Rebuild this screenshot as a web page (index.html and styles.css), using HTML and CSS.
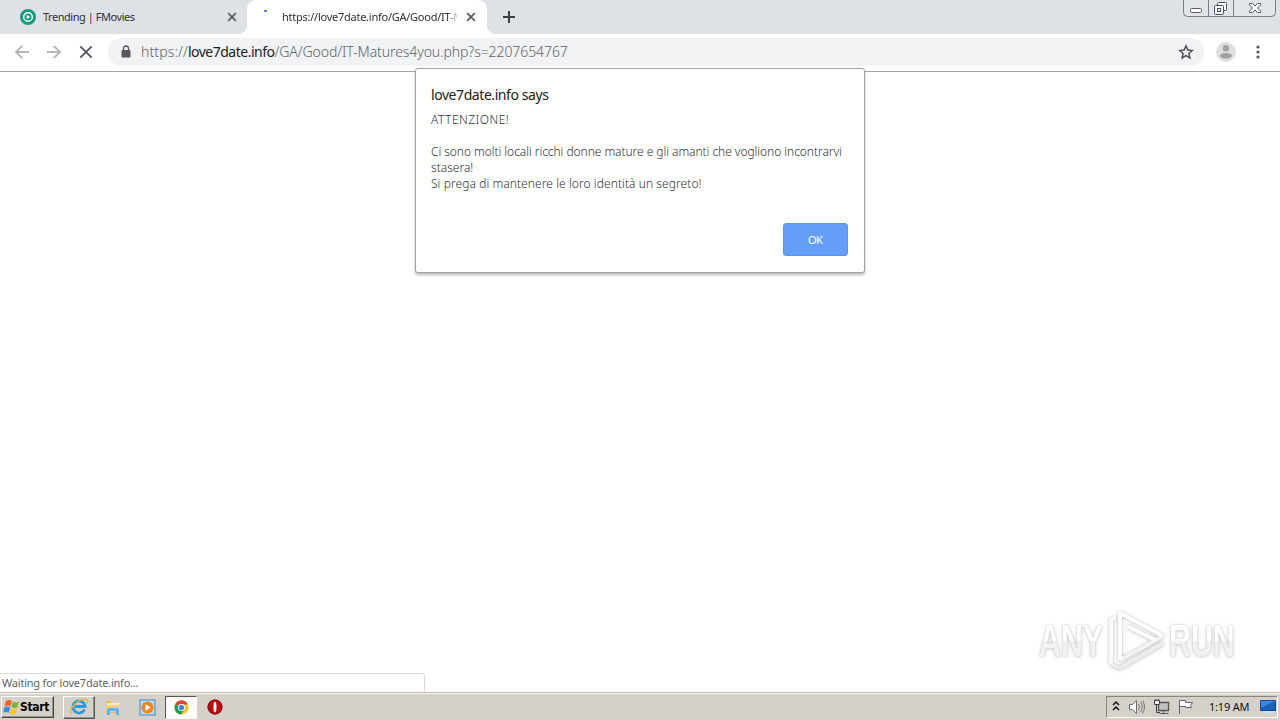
FILE: index.html
```html
<!DOCTYPE html>
<html lang="it">
<head>
<meta charset="utf-8">
<title>love7date.info</title>
<link rel="stylesheet" href="styles.css">
</head>
<body>
<div class="desktop">
  <header class="tabstrip">
    <div class="tab tab-idle">
      <svg class="favicon" width="16" height="16" viewBox="0 0 16 16"><circle cx="8" cy="8" r="8" fill="#129b7b"/><circle cx="8" cy="8" r="4.3" fill="none" stroke="#fff" stroke-width="1.4"/><path d="M6.7 5.8v4.4L10.3 8z" fill="#fff"/></svg>
      <span class="tab-title title-first">Trending | FMovies</span>
      <svg class="tab-close" width="10" height="10" viewBox="0 0 10 10"><path d="M1.2 1.2l7.6 7.6M8.8 1.2L1.2 8.8" stroke="#5a5d61" stroke-width="1.8"/></svg>
    </div>
    <div class="tab tab-active">
      <svg class="favicon" width="16" height="16" viewBox="0 0 16 16"><rect x="2" y="6" width="3" height="2" rx=".8" fill="#4a7bd0"/></svg>
      <span class="tab-title title-second">https://love7date.info/GA/Good/IT-M</span>
      <svg class="tab-close" width="10" height="10" viewBox="0 0 10 10"><path d="M1.2 1.2l7.6 7.6M8.8 1.2L1.2 8.8" stroke="#5a5d61" stroke-width="1.8"/></svg>
    </div>
    <svg class="new-tab" width="14" height="14" viewBox="0 0 14 14"><path d="M7 1v12M1 7h12" stroke="#3c4043" stroke-width="2"/></svg>
    <svg class="window-controls" width="94" height="18" viewBox="0 0 94 18">
      <path d="M.5 0v12.500q0 4 4 4h84q4 0 4-4V0M25.500 0v16.500M50.500 0v16.500" fill="#e1e4e9" stroke="#777c85"/>
      <rect x="7.500" y="8.500" width="11" height="4" rx="1" fill="#fff" stroke="#555b64"/>
      <g fill="#f6f7f8" stroke="#4d535c"><rect x="34.500" y="2.500" width="9" height="8" rx="1"/><rect x="31.500" y="5.500" width="9" height="9" rx="1"/><rect x="34.500" y="8.500" width="3" height="3"/></g>
      <path d="M66.500 3.500h3l2.500 2.500 2.500-2.500h3v1.500L74.500 8l3 3v1.500h-3L72 10l-2.500 2.500h-3V11l3-3-3-3z" fill="#fff" stroke="#555b64"/>
    </svg>
  </header>
  <div class="toolbar">
    <svg class="nav" width="16" height="16" viewBox="0 0 16 16"><path d="M15 8H2M8.200 1.800L2 8l6.200 6.200" fill="none" stroke="#b4b6b8" stroke-width="1.900"/></svg>
    <svg class="nav" width="16" height="16" viewBox="0 0 16 16"><path d="M1 8h13M7.800 1.800L14 8l-6.200 6.200" fill="none" stroke="#b4b6b8" stroke-width="1.900"/></svg>
    <svg class="nav" width="16" height="16" viewBox="0 0 16 16"><path d="M2.300 2.300l11.400 11.400M13.700 2.300L2.300 13.700" stroke="#55585c" stroke-width="1.900"/></svg>
    <div class="omnibox">
      <svg width="10" height="14" viewBox="0 0 10 14"><rect x=".5" y="5" width="9" height="7.500" rx="1" fill="#55585c"/><path d="M2.500 5.500V3.500a2.500 2.500 0 0 1 5 0v2" fill="none" stroke="#55585c" stroke-width="1.400"/></svg>
      <span class="url"><i>https://</i><b>love7date.info</b>/GA/Good/IT-Matures4you.php?s=2207654767</span>
      <svg class="star" width="16" height="16" viewBox="0 0 16 16"><path d="M8 1.900l1.800 4.200 4.500.4-3.400 3 1 4.500L8 11.600 4.100 14l1-4.500-3.400-3 4.500-.4z" fill="none" stroke="#4d5054" stroke-width="1.500"/></svg>
    </div>
    <svg class="avatar" width="20" height="20" viewBox="0 0 20 20"><circle cx="10" cy="10" r="10" fill="#dfdfdf"/><circle cx="10" cy="6.200" r="3.200" fill="#a1a1a1"/><ellipse cx="10" cy="13.800" rx="6" ry="2.900" fill="#a1a1a1"/></svg>
    <svg class="menu" width="4" height="16" viewBox="0 0 4 16"><g fill="#55585c"><circle cx="2" cy="3" r="1.600"/><circle cx="2" cy="8" r="1.600"/><circle cx="2" cy="13" r="1.600"/></g></svg>
  </div>
  <main class="page">
    <section class="dialog">
      <h1 class="dialog-title">love7date.info says</h1>
      <div class="message">
        <p class="m1">ATTENZIONE!</p>
        <p>&nbsp;</p>
        <p class="m2">Ci sono molti locali ricchi donne mature e gli amanti che vogliono incontrarvi</p>
        <p class="m3">stasera!</p>
        <p class="m4">Si prega di mantenere le loro identità un segreto!</p>
      </div>
      <button class="ok">OK</button>
    </section>
    <div class="watermark">
      <span class="wm-any">ANY</span>
      <svg class="wm-logo" width="60" height="64" viewBox="0 0 60 64"><g fill="none" stroke-width="4" stroke-linejoin="round"><path d="M5 55V11l5-3" stroke="#fafafa"/><path d="M5 55l9 4 43-25" stroke="#ededed"/><path d="M14 51L57 27" stroke="#f2f2f2"/><path d="M14 51V4l43 23M21 17l28 14" stroke="#fdfdfd"/></g></svg>
      <span class="wm-run">RUN</span>
    </div>
    <div class="status">Waiting for love7date.info...</div>
  </main>
  <footer class="taskbar">
    <div class="start">
      <svg width="17" height="16" viewBox="0 0 17 16"><path d="M3 2q3-2 6 0L7.500 7.500q-3-2-6 0z" fill="#ed652b"/><path d="M10 2.500q3 2 6 0L14.500 8q-3 2-6 0z" fill="#76b83b"/><path d="M1.200 8.500q3-2 6 0L5.700 14q-3-2-5.500 0z" fill="#3d8dd6"/><path d="M8.200 9q3 2 6 0l-1.500 5.500q-3 2-6 0z" fill="#f8c52c"/></svg>
      <span>Start</span>
    </div>
    <div class="task task-raised">
      <svg width="20" height="18" viewBox="0 0 20 18"><path d="M15.500 11.500A6 6 0 1 1 16 8.500H6" fill="none" stroke="#2d9be0" stroke-width="2.800"/><path d="M2 16C-1 11 11-1 18 1.800q1.500 1 0 3.500" fill="none" stroke="#e8b631" stroke-width="1.500"/></svg>
    </div>
    <div class="task">
      <svg width="18" height="18" viewBox="0 0 18 18"><path d="M2 3h5l1 2h7v10H2z" fill="#e6bd4f"/><path d="M3 5h12v5H3z" fill="#fff0a9"/><path d="M2 7h14v7H2z" fill="#efd47a"/><path d="M3 17v-5q0-2 2-2h8q2 0 2 2v5h-3v-4H6v4z" fill="#5db5e2"/></svg>
    </div>
    <div class="task">
      <svg width="17" height="17" viewBox="0 0 17 17"><rect x="1" y="1" width="15" height="15" fill="#b8dcf4" stroke="#3b8bc8"/><circle cx="8.500" cy="8.500" r="6" fill="#f28517"/><path d="M6.500 5v7l5-3.500z" fill="#fff"/></svg>
    </div>
    <div class="task task-pressed">
      <svg width="15" height="15" viewBox="0 0 16 16"><circle cx="8" cy="8" r="7.500" fill="#f6c72c"/><path d="M8 8L1.500 4.200A7.500 7.500 0 0 1 14.600 4.500H8z" fill="#dc4638"/><path d="M8 8L1.500 4.200A7.500 7.500 0 0 0 7.500 15.500L11 9.800z" fill="#279b54"/><path d="M4.700 6L8 4.500h6.600A7.500 7.500 0 0 0 1.500 4.200z" fill="#dc4638"/><circle cx="8" cy="8" r="3.700" fill="#fff"/><circle cx="8" cy="8" r="2.800" fill="#3e81ec"/></svg>
    </div>
    <div class="task">
      <svg width="16" height="16" viewBox="0 0 16 16"><circle cx="8" cy="8" r="7.500" fill="#b90f12"/><circle cx="8" cy="8" r="7" fill="none" stroke="#821014"/><ellipse cx="8" cy="8" rx="1.500" ry="5.300" fill="#fff"/></svg>
    </div>
    <div class="tray">
      <svg class="chevrons" width="8" height="12" viewBox="0 0 8 12"><path d="M1 5l3-3 3 3M1 10l3-3 3 3" fill="none" stroke="#111" stroke-width="1.500"/></svg>
      <svg class="speaker" width="18" height="16" viewBox="0 0 18 16"><path d="M1.500 5.500h3l4-4v13l-4-4h-3z" fill="#fff" stroke="#707070"/><path d="M10.500 5q2 3 0 6M12.500 3q3.500 5 0 10M14.500 1.500q4 6.500 0 13" fill="none" stroke="#777"/></svg>
      <svg class="network" width="17" height="16" viewBox="0 0 17 16"><path d="M5.500 3.500h10v8h-10z" fill="#bfc2c1" stroke="#555" stroke-width="1.300"/><path d="M6.500 14.500h9M10.500 12v2" stroke="#555"/><path d="M1.500 1.500h5v4h-5zM2.500 0v2M5.500 0v2" fill="#fff" stroke="#444"/><path d="M3.500 6v7.500H7" fill="none" stroke="#444"/></svg>
      <svg class="flag" width="17" height="16" viewBox="0 0 17 16"><path d="M2.500 15V1.500h6v2h7l-2 3 1 2H8.500v-1h-6" fill="#fff" stroke="#666"/></svg>
      <span class="clock">1:19 AM</span>
      <svg width="16" height="14" viewBox="0 0 16 14"><path d="M.5.500h15v10H.5z" fill="#1b5fb7" stroke="#174a92"/><path d="M1 1h14L1 8z" fill="#3f87d6"/><path d="M4 12.500h9" stroke="#c3def3" stroke-width="2"/></svg>
    </div>
  </footer>
</div>
</body>
</html>
```
FILE: styles.css
```css
* { box-sizing: border-box; }
body { margin: 0; font-family: "Noto Sans", "Open Sans", sans-serif; overflow: hidden; }
svg { display: block; flex: none; }
p, h1 { margin: 0; }
.desktop { width: 1280px; height: 720px; display: flex; flex-direction: column; background: #fff; }
.tabstrip { height: 34px; flex: none; display: flex; background: #dee1e6; }
.tab { display: flex; align-items: center; height: 34px; white-space: nowrap; }
.tab-idle { width: 247px; padding-left: 20px; }
.tab-active { width: 240px; padding-left: 15px; background: #fff; border-radius: 9px 9px 0 0; position: relative; }
.tab-active::before, .tab-active::after { content: ""; position: absolute; bottom: 0; width: 8px; height: 8px; }
.tab-active::before { left: -8px; background: radial-gradient(circle at 0 0, #dee1e6 7.500px, #fff 8px); }
.tab-active::after { right: -8px; background: radial-gradient(circle at 100% 0, #dee1e6 7.500px, #fff 8px); }
.favicon { margin-right: 7px; }
.tab-active .favicon { margin: -10px 4px 0 0; }
.tab-title { font-size: 11px; line-height: 16px; color: #303236; }
.title-first { width: 184px; letter-spacing: -.46px; }
.title-second { width: 175px; letter-spacing: -.25px; margin-right: 9px; -webkit-mask-image: linear-gradient(90deg, #000 165px, transparent 178px); }
.new-tab { margin: 10px 0 0 15px; }
.window-controls { margin-left: auto; margin-right: 3px; }
.toolbar { height: 38px; flex: none; display: flex; align-items: center; padding: 0 20px 2px 14px; border-bottom: 1px solid #a4a5a5; }
.nav { margin-right: 16px; }
.omnibox { width: 1096px; height: 28px; margin-left: -2px; border-radius: 14px; background: #f0f2f4; display: flex; align-items: center; padding: 0 10px 0 13px; }
.url { font-size: 14px; font-weight: 300; letter-spacing: -.08px; color: #606468; margin-left: 10px; white-space: nowrap; }
.url i { font-style: normal; letter-spacing: .12px; }
.url b { font-weight: 400; color: #202124; letter-spacing: -.5px; }
.star { margin-left: auto; }
.avatar { margin-left: 12px; }
.menu { margin-left: 20px; }
.page { flex: 1; display: flex; flex-direction: column; position: relative; }
.dialog { position: absolute; left: 415px; top: -4px; width: 450px; height: 205px; padding: 16px 15px; display: flex; flex-direction: column; background: #fff; border: 1px solid #a4a4a4; border-radius: 3px; box-shadow: 0 2px 3px rgba(0,0,0,.28); }
.dialog-title { font-size: 14px; line-height: 20px; font-weight: 400; color: #202124; letter-spacing: -.43px; }
.message { font-size: 12px; line-height: 16px; font-weight: 300; color: #303236; margin-top: 7px; white-space: nowrap; }
.m1 { letter-spacing: .48px; }
.m2 { letter-spacing: -.05px; }
.m4 { letter-spacing: .07px; }
.ok { margin: auto 1px 0 auto; width: 65px; height: 33px; border: 1px solid #5b94ed; border-radius: 3px; background: #669df6; color: #fff; font: 11px "Noto Sans", sans-serif; letter-spacing: -.7px; padding: 0 1px 1px 0; }
.watermark { position: absolute; left: 1039px; top: 537px; display: flex; align-items: center; font: 700 44px/64px "Liberation Sans", sans-serif; filter: drop-shadow(0 0 1px rgba(0,0,0,.2)) drop-shadow(0 1px 2px rgba(0,0,0,.13)); }
.wm-any, .wm-run { display: block; width: 67px; transform: scaleX(.69); transform-origin: left; color: transparent; background: linear-gradient(#fff 50%, #f2f2f2 50%) text; }
.wm-any, .wm-run { overflow: visible; width: 94px; margin-right: -27px; }
.wm-run { margin-left: 3px; }
.status { margin-top: auto; width: 425px; height: 19px; padding-left: 2px; border: 1px solid #d8d8d8; border-left: 0; border-bottom: 0; border-radius: 0 3px 0 0; font-size: 11px; line-height: 18px; color: #606368; letter-spacing: -.21px; }
.taskbar { height: 28px; flex: none; display: flex; align-items: center; background: #d5d0c9; border-top: 1px solid #bcb9b2; box-shadow: inset 0 1px #f7f6f3; padding: 1px 0 0 1px; }
.start { width: 53px; height: 22px; display: flex; align-items: center; padding-left: 1px; font: 700 12px "DejaVu Sans Condensed", sans-serif; letter-spacing: -.3px; border: 1px solid; border-color: #fff #444 #444 #fff; box-shadow: inset -1px -1px #969189; margin-right: 9px; }
.task { width: 32px; height: 23px; margin-right: 2px; display: flex; align-items: center; justify-content: center; border: 1px solid transparent; }
.task-raised { border-color: #fff #555 #555 #fff; box-shadow: inset -1px -1px #969189; }
.task-pressed { background: #fcfcfb; border-color: #555 #fff #fff #555; }
.tray { margin-left: auto; width: 172px; margin-right: 2px; height: 22px; display: flex; align-items: center; border: 1px solid; border-color: #8b8780 #fff #fff #8b8780; padding-left: 5px; }
.chevrons { margin-top: -3px; }
.speaker { margin-left: 8px; }
.network { margin-left: 7px; }
.flag { margin-left: 7px; }
.clock { width: 42px; margin: 0 9px 1px 15px; font-size: 11px; white-space: nowrap; color: #111; letter-spacing: -.2px; }
```
